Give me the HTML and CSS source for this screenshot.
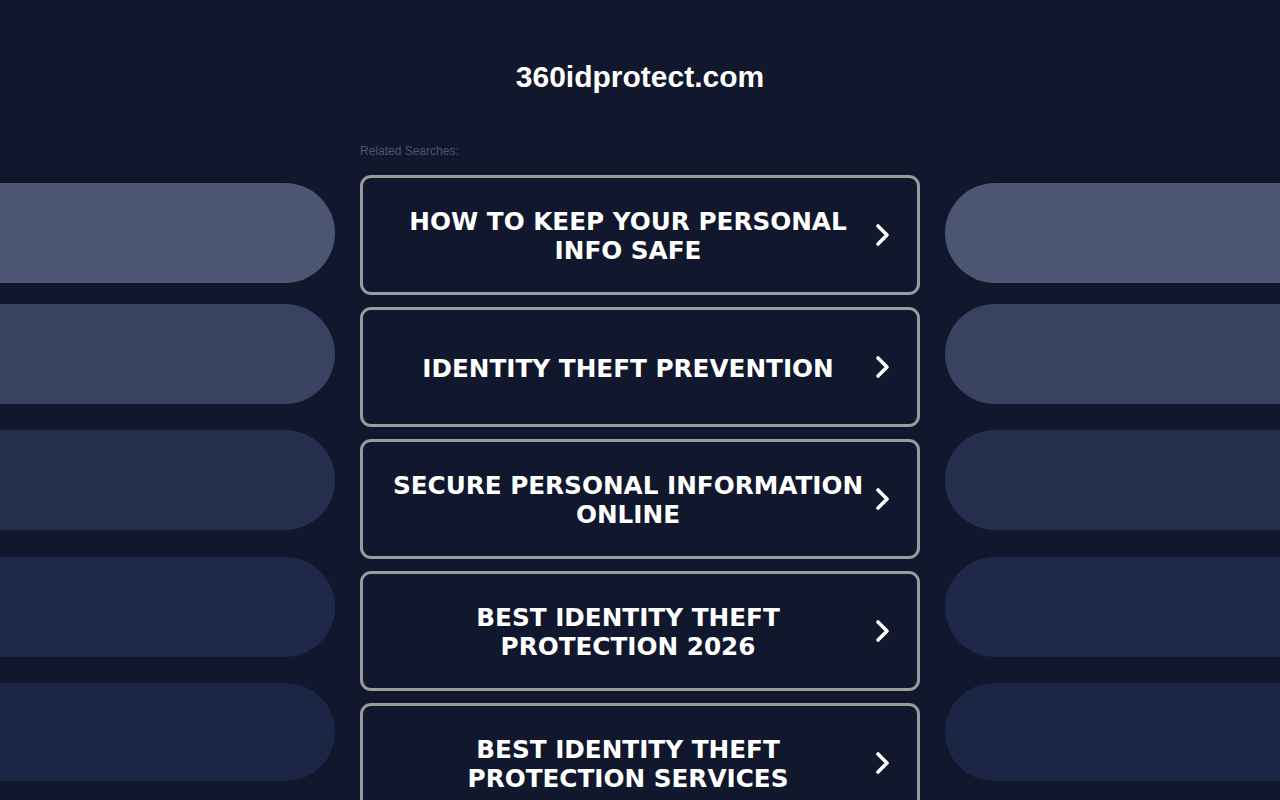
FILE: index.html
```html
<!DOCTYPE html>
<html lang="en">
<head>
  <meta charset="UTF-8">
  <meta name="viewport" content="width=device-width, initial-scale=1.0">
  <title>360idprotect.com</title>
  <link rel="stylesheet" href="styles.css">
</head>
<body>
  <div class="head">
    <h1>360idprotect.com</h1>
  </div>

  <div class="wrap">
    <div class="side side-left">
      <div class="pill p1"></div>
      <div class="pill p2"></div>
      <div class="pill p3"></div>
      <div class="pill p4"></div>
      <div class="pill p5"></div>
    </div>

    <div class="mid">
      <div class="label">Related Searches:</div>
      <div class="list">
        <a class="card" href="#">
          <span class="txt">HOW TO KEEP YOUR PERSONAL INFO SAFE</span>
          <svg class="arr" viewBox="0 0 20 26"><path d="M5 4 L14 13 L5 22"/></svg>
        </a>
        <a class="card" href="#">
          <span class="txt">IDENTITY THEFT PREVENTION</span>
          <svg class="arr" viewBox="0 0 20 26"><path d="M5 4 L14 13 L5 22"/></svg>
        </a>
        <a class="card" href="#">
          <span class="txt">SECURE PERSONAL INFORMATION ONLINE</span>
          <svg class="arr" viewBox="0 0 20 26"><path d="M5 4 L14 13 L5 22"/></svg>
        </a>
        <a class="card" href="#">
          <span class="txt">BEST IDENTITY THEFT PROTECTION 2026</span>
          <svg class="arr" viewBox="0 0 20 26"><path d="M5 4 L14 13 L5 22"/></svg>
        </a>
        <a class="card" href="#">
          <span class="txt">BEST IDENTITY THEFT PROTECTION SERVICES</span>
          <svg class="arr" viewBox="0 0 20 26"><path d="M5 4 L14 13 L5 22"/></svg>
        </a>
      </div>
    </div>

    <div class="side side-right">
      <div class="pill p1"></div>
      <div class="pill p2"></div>
      <div class="pill p3"></div>
      <div class="pill p4"></div>
      <div class="pill p5"></div>
    </div>
  </div>
</body>
</html>
```

FILE: styles.css
```css
* {
  padding: 0;
  margin: 0;
  box-sizing: border-box;
}

html, body {
  height: 100%;
  overflow: hidden;
}

body {
  background: #11172c;
  font-family: "Liberation Sans", Arial, sans-serif;
}

.head {
  padding-top: 58px;
  text-align: center;
}

.head h1 {
  color: white;
  font-size: 30px;
  line-height: 38px;
  font-weight: bold;
}

.wrap {
  margin-top: 48px;
  display: grid;
  grid-template-columns: 335px 560px 335px;
  column-gap: 25px;
}

.side {
  padding-top: 39px;
  display: flex;
  flex-direction: column;
}

.pill {
  height: 100px;
  background: #4c5672;
}

.side-left .pill {
  border-radius: 0 50px 50px 0;
}

.side-right .pill {
  border-radius: 50px 0 0 50px;
}

.p2 {
  margin-top: 21px;
  background: #3a4262;
}

.p3 {
  margin-top: 26px;
  background: #272f4e;
}

.p4 {
  margin-top: 27px;
  background-color: #1e2747;
  background-image: radial-gradient(rgba(60, 75, 115, 0.18) 0.6px, transparent 0.9px);
  background-size: 4px 4px;
}

.p5 {
  margin-top: 26px;
  height: 98px;
  background-color: #1c2546;
  background-image: radial-gradient(rgba(12, 18, 38, 0.25) 0.6px, transparent 0.9px);
  background-size: 5px 5px;
}

.label {
  color: #4a5577;
  font-size: 12px;
  line-height: 14px;
  margin-bottom: 17px;
}

.list {
  display: flex;
  flex-direction: column;
  gap: 12px;
}

.card {
  height: 120px;
  border: 3px solid #9b9b9b;
  border-radius: 11px;
  display: flex;
  align-items: center;
  padding: 0 24px 0 20px;
  text-decoration: none;
}

.txt {
  flex: 1;
  text-align: center;
  color: white;
  font-family: "DejaVu Sans", Tahoma, sans-serif;
  font-weight: bold;
  font-size: 24.7px;
  line-height: 29px;
  padding: 2px 6px 0;
}

.arr {
  width: 20px;
  height: 26px;
  flex: none;
}

.arr path {
  fill: none;
  stroke: white;
  stroke-width: 3.6;
  stroke-linecap: round;
  stroke-linejoin: round;
}
```
